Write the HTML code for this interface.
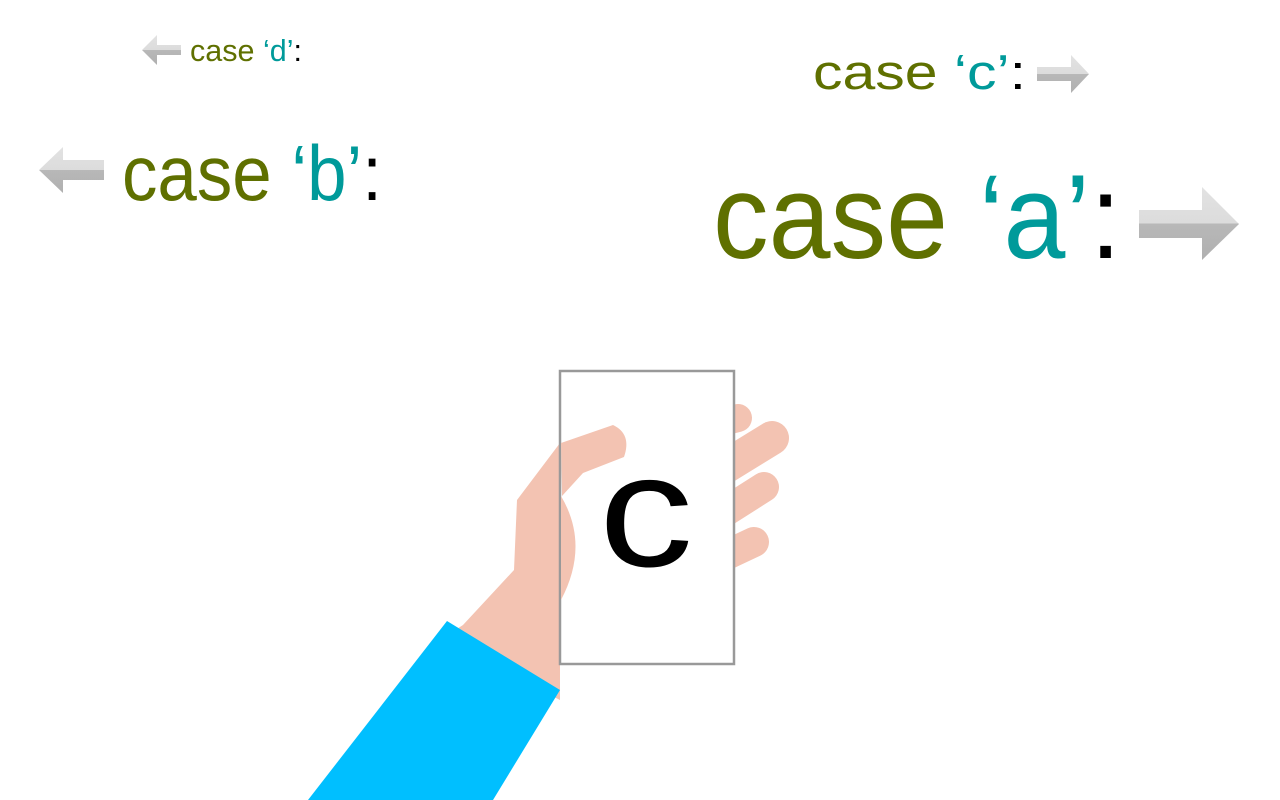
<!DOCTYPE html>
<html><head><meta charset="utf-8"><style>
html,body{margin:0;padding:0;background:#fff;width:1280px;height:800px;overflow:hidden}
svg text{font-family:"Liberation Sans",sans-serif}
</style></head><body>
<svg width="1280" height="800" viewBox="0 0 1280 800" xmlns="http://www.w3.org/2000/svg">
<defs>
<linearGradient id="g" x1="0" y1="0" x2="0" y2="1">
<stop offset="0" stop-color="#e2e2e2"/><stop offset="0.5" stop-color="#dcdcdc"/><stop offset="0.5" stop-color="#b8b8b8"/><stop offset="1" stop-color="#b0b0b0"/>
</linearGradient>
</defs>
<polygon fill="url(#g)" points="1139,210 1202,210 1202,187 1239,224 1202,260 1202,238 1139,238"/>
<polygon fill="url(#g)" points="1037,67 1071,67 1071,55 1089,74 1071,93 1071,81 1037,81"/>
<polygon fill="url(#g)" points="104,160 63,160 63,147 39,170 63,193 63,180 104,180"/>
<polygon fill="url(#g)" points="181,45 157,45 157,35 142,50 157,65 157,55 181,55"/>
<text x="713" y="258" font-size="120" textLength="408" lengthAdjust="spacingAndGlyphs"><tspan fill="#5f7000">case </tspan><tspan fill="#009a9a">‘a’</tspan><tspan fill="#000">:</tspan></text>
<text x="122" y="200" font-size="78" textLength="260" lengthAdjust="spacingAndGlyphs"><tspan fill="#5f7000">case </tspan><tspan fill="#009a9a">‘b’</tspan><tspan fill="#000">:</tspan></text>
<text x="813" y="89" font-size="49" textLength="213" lengthAdjust="spacingAndGlyphs"><tspan fill="#5f7000">case </tspan><tspan fill="#009a9a">‘c’</tspan><tspan fill="#000">:</tspan></text>
<text x="190" y="61" font-size="31" textLength="112" lengthAdjust="spacingAndGlyphs"><tspan fill="#5f7000">case </tspan><tspan fill="#009a9a">‘d’</tspan><tspan fill="#000">:</tspan></text>
<g stroke="#f3c3b2" stroke-linecap="round" fill="none">
<line x1="730" y1="420" x2="738" y2="418" stroke-width="28"/>
<line x1="720" y1="470" x2="772" y2="438" stroke-width="34"/>
<line x1="720" y1="515" x2="764" y2="487" stroke-width="30"/>
<line x1="720" y1="558" x2="754" y2="542" stroke-width="30"/>
</g>
<path fill="#f3c3b2" d="M517,500 L560,443 L613,425 Q632,434 624,457 L583,473 L562,496 Q590,545 560,605 L560,700 L440,640 L463,625 L514,570 Z"/>
<rect x="560" y="371" width="174" height="293" fill="#fff" stroke="#999" stroke-width="2.5"/>
<path fill="#f3c3b2" d="M561,443 L613,425 Q632,434 624,457 L583,473 L562,496 Z"/>
<path fill="#f3c3b2" d="M561,496 Q590,545 561,600 Z"/>
<text x="0" y="0" font-size="160" text-anchor="middle" fill="#000" transform="translate(646,566) scale(1.18,1)">c</text>
<polygon fill="#00bfff" points="447,621 560,690 493,800 308,800"/>
</svg>
</body></html>
